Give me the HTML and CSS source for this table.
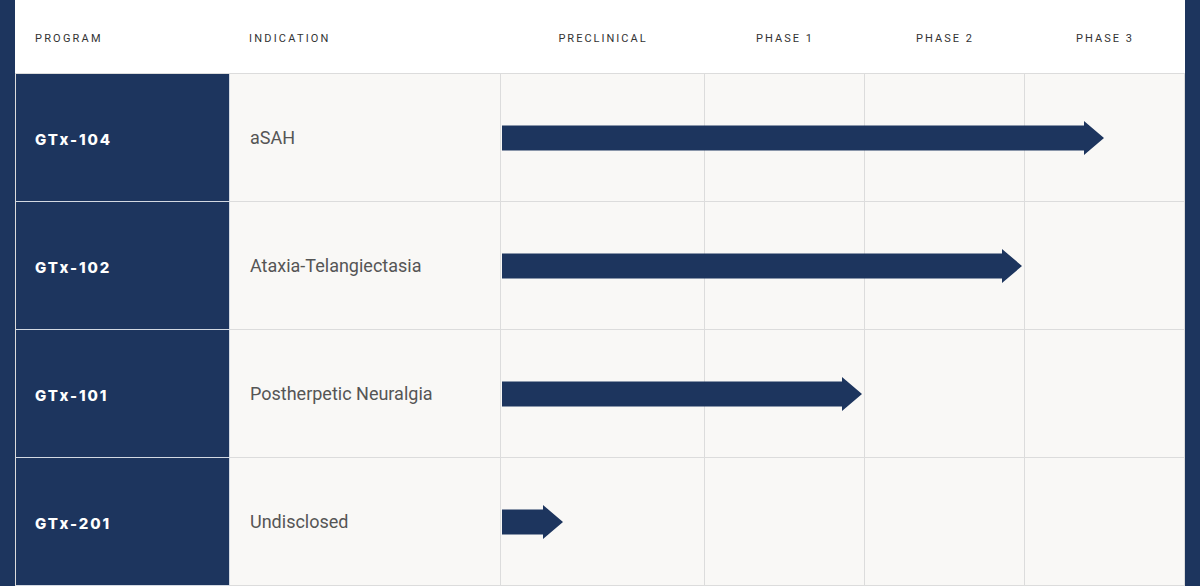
FILE: index.html
```html
<!DOCTYPE html>
<html>
<head>
<meta charset="utf-8">
<link rel="stylesheet" href="styles.css">
</head>
<body>
<div class="pipeline">
  <div class="hd hd-left">PROGRAM</div>
  <div class="hd hd-left hd-ind">INDICATION</div>
  <div class="hd hd-phase">PRECLINICAL</div>
  <div class="hd hd-phase">PHASE 1</div>
  <div class="hd hd-phase">PHASE 2</div>
  <div class="hd hd-phase">PHASE 3</div>

  <div class="prog r1">GTx-104</div>
  <div class="ind r1">aSAH</div>
  <div class="ph c3 r1"></div><div class="ph c4 r1"></div><div class="ph c5 r1"></div><div class="ph c6 r1"></div>
  <div class="arrow r1"><svg width="602" height="34" viewBox="0 0 602 34"><polygon points="0,4.5 582,4.5 582,0 602,17 582,34 582,29.5 0,29.5"/></svg></div>

  <div class="prog r2">GTx-102</div>
  <div class="ind r2">Ataxia-Telangiectasia</div>
  <div class="ph c3 r2"></div><div class="ph c4 r2"></div><div class="ph c5 r2"></div><div class="ph c6 r2"></div>
  <div class="arrow r2"><svg width="520" height="34" viewBox="0 0 520 34"><polygon points="0,4.5 500,4.5 500,0 520,17 500,34 500,29.5 0,29.5"/></svg></div>

  <div class="prog r3">GTx-101</div>
  <div class="ind r3">Postherpetic Neuralgia</div>
  <div class="ph c3 r3"></div><div class="ph c4 r3"></div><div class="ph c5 r3"></div><div class="ph c6 r3"></div>
  <div class="arrow r3"><svg width="360" height="34" viewBox="0 0 360 34"><polygon points="0,4.5 340,4.5 340,0 360,17 340,34 340,29.5 0,29.5"/></svg></div>

  <div class="prog r4">GTx-201</div>
  <div class="ind r4">Undisclosed</div>
  <div class="ph c3 r4"></div><div class="ph c4 r4"></div><div class="ph c5 r4"></div><div class="ph c6 r4"></div>
  <div class="arrow r4"><svg width="61" height="34" viewBox="0 0 61 34"><polygon points="0,4.5 41,4.5 41,0 61,17 41,34 41,29.5 0,29.5"/></svg></div>
</div>
</body>
</html>
```

FILE: styles.css
```css
html, body {
  margin: 0;
  padding: 0;
  background: #1d355e;
  height: 586px;
  overflow: hidden;
}

.pipeline {
  margin: 0 15px;
  background: #ffffff;
  display: grid;
  grid-template-columns: 215px 271px 204px 160px 160px 160px;
  grid-template-rows: 74px repeat(4, 128px);
  font-family: Roboto, "Liberation Sans", sans-serif;
}

.hd {
  box-sizing: border-box;
  border-bottom: 1px solid #dcdcdc;
  display: flex;
  align-items: center;
  padding-top: 4px;
  font-size: 11px;
  color: #333333;
  grid-row: 1;
}

.hd-left {
  padding-left: 20px;
  letter-spacing: 2.2px;
}

.hd-ind {
  padding-left: 19px;
}

.hd-phase {
  justify-content: center;
  letter-spacing: 2px;
}

.prog, .ind, .ph {
  box-sizing: border-box;
  border-bottom: 1px solid #dcdcdc;
  border-right: 1px solid #dcdcdc;
}

.prog {
  grid-column: 1;
  background: #1d355e;
  border-left: 1px solid #dcdcdc;
  border-right-color: #d3d9e2;
  border-bottom-color: #d3d9e2;
  color: #ffffff;
  font-family: Inter, "Open Sans", sans-serif;
  font-weight: 800;
  font-size: 15px;
  letter-spacing: 1.9px;
  display: flex;
  align-items: center;
  padding-left: 19px;
  padding-top: 3px;
}

.ind {
  grid-column: 2;
  background: #f9f8f6;
  color: #555555;
  font-size: 18px;
  display: flex;
  align-items: center;
  padding-left: 20px;
}

.ph {
  background: #f9f8f6;
}

.c3 { grid-column: 3; }
.c4 { grid-column: 4; }
.c5 { grid-column: 5; }
.c6 { grid-column: 6; }

.r1 { grid-row: 2; }
.r2 { grid-row: 3; }
.r3 { grid-row: 4; }
.r4 { grid-row: 5; }

.arrow {
  grid-column: 3 / 7;
  align-self: center;
  justify-self: start;
  margin-left: 1px;
  position: relative;
  z-index: 1;
  height: 34px;
  line-height: 0;
}

.arrow svg {
  display: block;
}

.arrow polygon {
  fill: #1d355e;
}
```
